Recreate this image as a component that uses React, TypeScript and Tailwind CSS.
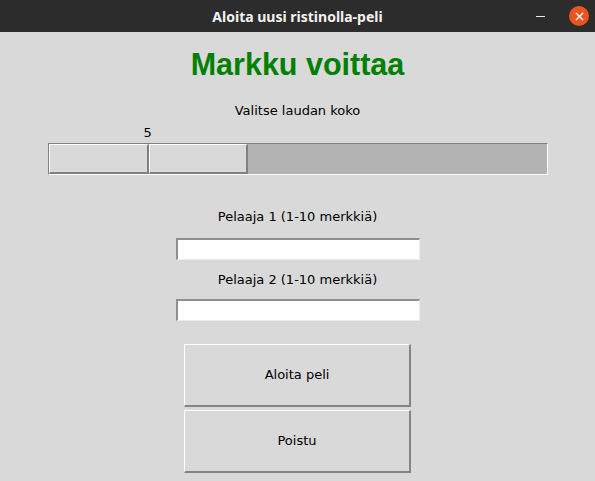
import { X } from 'lucide-react'

const body = { fontFamily: '"DejaVu Sans", sans-serif' }

function TitleBar() {
  return (
    <div className="relative flex h-[32px] items-center justify-center bg-[#2c2c2c]">
      <span
        className="text-[14px] font-bold text-[#f2f2f2]"
        style={{ fontFamily: '"Noto Sans", "DejaVu Sans", sans-serif' }}
      >
        Aloita uusi ristinolla-peli
      </span>
      <div className="absolute right-[6px] top-[6px] flex items-center gap-[24px]">
        <div className="h-[1px] w-[9px] bg-[#e6e6e6]" />
        <div className="flex h-[20px] w-[20px] items-center justify-center rounded-full bg-[#e9541f]">
          <X className="h-[13px] w-[13px] text-white" strokeWidth={2.5} />
        </div>
      </div>
    </div>
  )
}

function Scale() {
  return (
    <div className="flex flex-col">
      <div className="flex h-[20px] w-[500px] items-center">
        <span className="ml-[96px] text-[13px] text-black" style={body}>5</span>
      </div>
      <div className="flex h-[32px] w-[500px] border-l border-t border-b border-r border-l-[#808080] border-t-[#808080] border-b-white border-r-white bg-[#b3b3b3]">
        <div className="h-full w-[100px] border-l border-t border-l-white border-t-white border-b-2 border-r-2 border-b-[#808080] border-r-[#808080] bg-[#d9d9d9]" />
        <div className="h-full w-[99px] border-l border-t border-l-white border-t-white border-b-2 border-r-2 border-b-[#808080] border-r-[#808080] bg-[#d9d9d9]" />
      </div>
    </div>
  )
}

function Entry() {
  return (
    <div className="h-[22px] w-[244px] border-l-2 border-t-2 border-l-[#8f8f8f] border-t-[#8f8f8f] border-b border-r border-b-[#ececec] border-r-[#ececec] bg-white" />
  )
}

function TkButton({ label }: { label: string }) {
  return (
    <button
      className="flex h-[63px] w-[227px] items-center justify-center border-l border-t border-l-white border-t-white border-b-2 border-r-2 border-b-[#848484] border-r-[#848484] bg-[#d9d9d9] text-[13px] text-black"
      style={body}
    >
      {label}
    </button>
  )
}

export default function App() {
  return (
    <div className="flex h-[481px] w-[595px] flex-col overflow-hidden bg-[#d9d9d9]">
      <TitleBar />
      <div className="flex flex-col items-center">
        <h1
          className="mt-[15px] h-[34px] text-[30.5px] font-bold leading-[34px] text-[#008000]"
          style={{ fontFamily: '"Liberation Sans", Arial, sans-serif' }}
        >
          Markku voittaa
        </h1>
        <div className="mt-[20px] flex h-[20px] items-center text-[13px] text-black" style={body}>
          Valitse laudan koko
        </div>
        <div className="mt-[2px]">
          <Scale />
        </div>
        <div className="mt-[32px] flex h-[20px] items-center text-[13px] text-black" style={body}>
          Pelaaja 1 (1-10 merkkiä)
        </div>
        <div className="mt-[11px]">
          <Entry />
        </div>
        <div className="mt-[10px] flex h-[20px] items-center text-[13px] text-black" style={body}>
          Pelaaja 2 (1-10 merkkiä)
        </div>
        <div className="mt-[9px]">
          <Entry />
        </div>
        <div className="mt-[23px] flex flex-col gap-[3px]">
          <TkButton label="Aloita peli" />
          <TkButton label="Poistu" />
        </div>
      </div>
    </div>
  )
}
